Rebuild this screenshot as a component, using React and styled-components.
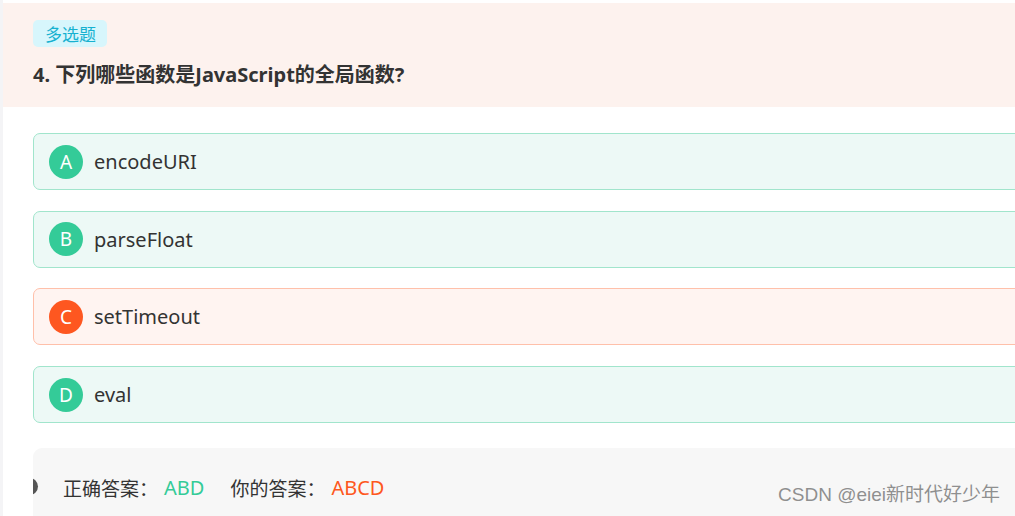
import React from "react";
import styled, { createGlobalStyle } from "styled-components";

const Global = createGlobalStyle`
  html, body { margin: 0; padding: 0; background: #fff; overflow: hidden; }
  body { font-family: "Noto Sans", "Noto Sans CJK SC", sans-serif; color: #333; }
`;

const Page = styled.div`
  display: flex;
  width: 1015px;
  height: 516px;
  overflow: hidden;
  position: relative;
`;

const SideStrip = styled.div`
  flex: 0 0 3px;
  background: #f4f4f6;
`;

const Main = styled.div`
  flex: 0 0 1080px;
  padding-top: 3px;
  display: flex;
  flex-direction: column;
`;

const Header = styled.div`
  background: #fdf2ee;
  height: 104px;
  box-sizing: border-box;
  padding: 17px 30px 0;
`;

const Tag = styled.span`
  display: inline-block;
  background: #d7f6fc;
  color: #16b1d0;
  font-size: 17px;
  line-height: 27px;
  height: 27px;
  padding: 0 11px 0 12px;
  border-radius: 5px;
  font-family: "Noto Sans CJK SC", sans-serif;
`;

const Title = styled.div`
  margin-top: 15px;
  font-size: 20px;
  font-weight: 700;
  color: #333;
  line-height: 26px;
  font-family: "Noto Sans", "Noto Sans CJK SC", sans-serif;
`;

const Options = styled.div`
  display: flex;
  flex-direction: column;
  gap: 20.7px;
  padding: 26px 0 0 30px;
`;

const Option = styled.div`
  display: flex;
  align-items: center;
  height: 57px;
  box-sizing: border-box;
  padding-left: 15px;
  border: 1px solid ${(p) => (p.$wrong ? "#ffc0aa" : "#a1e5cc")};
  background: ${(p) => (p.$wrong ? "#fff4f1" : "#edf9f6")};
  border-radius: 7px;
`;

const Letter = styled.span`
  width: 34px;
  height: 34px;
  border-radius: 50%;
  background: ${(p) => (p.$wrong ? "#fe5720" : "#34cb98")};
  color: #fff;
  font-size: 19px;
  display: flex;
  align-items: center;
  justify-content: center;
  margin-right: 11px;
`;

const OptionText = styled.span`
  font-size: 20px;
  color: #333;
`;

const AnswerBox = styled.div`
  position: relative;
  overflow: hidden;
  margin: 25px 0 0 30px;
  flex: 1;
  background: #f7f7f7;
  border-top-left-radius: 9px;
  display: flex;
  align-items: flex-start;
  padding: 26px 0 0 30px;
  font-size: 19px;
  font-family: "Noto Sans CJK SC", sans-serif;
`;

const Dot = styled.span`
  position: absolute;
  left: -12px;
  top: 30px;
  width: 17px;
  height: 17px;
  border-radius: 50%;
  background: #555;
`;

const Label = styled.span`
  color: #333;
  margin-right: 6px;
`;

const Value = styled.span`
  color: ${(p) => (p.$wrong ? "#fe5720" : "#34cb98")};
  margin-right: ${(p) => (p.$gap ? "26px" : "0")};
  font-size: 20px;
  font-family: "Noto Sans", sans-serif;
`;

const Watermark = styled.div`
  position: absolute;
  right: 15px;
  bottom: 10px;
  font-family: "Liberation Sans", "Noto Sans CJK SC", sans-serif;
  font-size: 19px;
  color: #8f8f8f;
  text-shadow: 0 0 1px #fff;
`;

const options = [
  { k: "A", t: "encodeURI" },
  { k: "B", t: "parseFloat" },
  { k: "C", t: "setTimeout", wrong: true },
  { k: "D", t: "eval" },
];

export default function App() {
  return (
    <>
      <Global />
      <Page>
        <SideStrip />
        <Main>
          <Header>
            <Tag>多选题</Tag>
            <Title>4. 下列哪些函数是JavaScript的全局函数?</Title>
          </Header>
          <Options>
            {options.map((o) => (
              <Option key={o.k} $wrong={o.wrong}>
                <Letter $wrong={o.wrong}>{o.k}</Letter>
                <OptionText>{o.t}</OptionText>
              </Option>
            ))}
          </Options>
          <AnswerBox>
            <Dot />
            <Label>正确答案：</Label>
            <Value $gap>ABD</Value>
            <Label>你的答案：</Label>
            <Value $wrong>ABCD</Value>
          </AnswerBox>
        </Main>
        <Watermark>CSDN @eiei新时代好少年</Watermark>
      </Page>
    </>
  );
}
